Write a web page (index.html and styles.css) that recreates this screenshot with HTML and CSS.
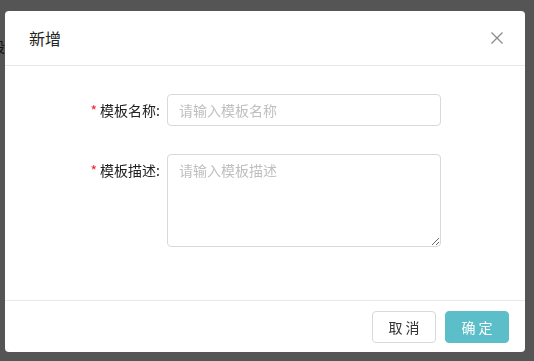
FILE: index.html
```html
<!DOCTYPE html>
<html lang="zh-CN">
<head>
    <meta charset="UTF-8">
    <meta name="viewport" content="width=device-width, initial-scale=1.0">
    <title>新增模板</title>
    <link rel="stylesheet" href="styles.css">
</head>
<body>
    <div class="page">
        <div class="page-side">设置</div>
        <div class="page-col">创建时间</div>
    </div>

    <div class="mask">
        <div class="modal">
            <div class="modal-header">
                <span class="modal-title">新增</span>
                <button class="close-btn" aria-label="关闭">
                    <svg width="14" height="14" viewBox="0 0 14 14">
                        <path d="M1.5 1.5 L12.5 12.5 M12.5 1.5 L1.5 12.5" stroke="#8c8c8c" stroke-width="1.3" fill="none"/>
                    </svg>
                </button>
            </div>

            <div class="modal-body">
                <div class="form-row">
                    <label class="form-label"><span class="required">*</span>模板名称:</label>
                    <input class="form-input" type="text" placeholder="请输入模板名称">
                </div>
                <div class="form-row">
                    <label class="form-label"><span class="required">*</span>模板描述:</label>
                    <textarea class="form-textarea" placeholder="请输入模板描述"></textarea>
                </div>
            </div>

            <div class="modal-footer">
                <button class="btn">取 消</button>
                <button class="btn btn-primary">确 定</button>
            </div>
        </div>
    </div>
</body>
</html>
```

FILE: styles.css
```css
* {
    margin: 0;
    padding: 0;
    box-sizing: border-box;
}

body {
    font-family: "Noto Sans CJK SC", "Liberation Sans", sans-serif;
    font-size: 14px;
    color: #333;
    background: #fff;
    height: 100vh;
    overflow: hidden;
}

.page {
    height: 100%;
    display: flex;
    flex-direction: column;
    padding-top: 36px;
}

.page-side {
    margin-left: -9px;
    color: #333;
}

.page-col {
    margin-top: auto;
    margin-left: 93px;
    margin-bottom: -16px;
    color: #333;
}

.mask {
    position: fixed;
    inset: 0;
    background: rgba(0, 0, 0, 0.665);
}

.modal {
    margin: 11px 0 0 5px;
    width: 520px;
    height: 341px;
    background: #fff;
    border-radius: 4px;
    display: flex;
    flex-direction: column;
}

.modal-header {
    height: 55px;
    padding: 0 20px 0 24px;
    border-bottom: 1px solid #e8e8e8;
    display: flex;
    align-items: center;
    justify-content: space-between;
}

.modal-title {
    font-size: 16px;
    color: #222;
}

.close-btn {
    border: none;
    background: none;
    width: 14px;
    height: 14px;
    display: flex;
    margin-right: 1px;
    cursor: pointer;
}

.modal-body {
    flex: 1;
    padding: 28px 84px 0 55px;
    display: flex;
    flex-direction: column;
    gap: 28px;
}

.form-row {
    display: flex;
    gap: 7px;
}

.form-label {
    width: 100px;
    flex-shrink: 0;
    height: 32px;
    line-height: 32px;
    text-align: right;
    color: #222;
}

.required {
    color: #f5222d;
    margin-right: 3px;
}

.form-input,
.form-textarea {
    flex: 1;
    font-family: inherit;
    font-size: 14px;
    color: #333;
    border: 1px solid #d9d9d9;
    border-radius: 4px;
    padding: 4px 11px;
    outline: none;
}

.form-input {
    height: 32px;
}

.form-textarea {
    height: 93px;
    resize: vertical;
    line-height: 22px;
}

.form-input::placeholder,
.form-textarea::placeholder {
    color: #bfbfbf;
}

.modal-footer {
    height: 52px;
    border-top: 1px solid #e8e8e8;
    padding: 0 16px;
    display: flex;
    align-items: center;
    justify-content: flex-end;
    gap: 9px;
}

.btn {
    width: 64px;
    height: 32px;
    font-family: inherit;
    font-size: 14px;
    color: #333;
    background: #fff;
    border: 1px solid #d9d9d9;
    border-radius: 4px;
    cursor: pointer;
}

.btn-primary {
    color: #fff;
    background: #5bbec9;
    border-color: #5bbec9;
}
```
